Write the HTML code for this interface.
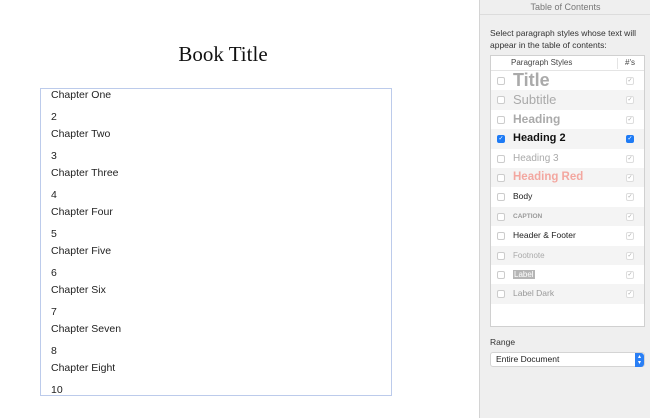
<!DOCTYPE html><html><head><style>
body{margin:0;width:650px;height:418px;overflow:hidden;background:#fff;font-family:"Liberation Sans",Helvetica,sans-serif;position:relative}
.title{position:absolute;left:0;width:446px;top:42px;text-align:center;font-family:"Liberation Serif",serif;font-size:21px;color:#111}
.box{position:absolute;left:40px;top:88px;width:350px;height:306px;border:1px solid #bccbeb;overflow:hidden}
.box div{position:absolute;left:10px;font-size:10.5px;color:#222}
.side{position:absolute;left:479px;top:0;width:171px;height:418px;background:#efefef;border-left:1px solid #d4d4d4}
.hdr{height:14px;border-bottom:1px solid #dcdcdc;text-align:center;font-size:9px;color:#777;line-height:14px}
.desc{position:absolute;left:10px;top:27px;font-size:8.5px;color:#333;line-height:12px}
.tbl{position:absolute;left:10px;top:55px;width:153px;height:270px;background:#fff;border:1px solid #d0d0d0}
.th{height:14px;border-bottom:1px solid #e4e4e4;font-size:8px;color:#444;line-height:14px;position:relative}
.row{height:19.4px;position:relative}
.cb{position:absolute;left:6px;top:6px;width:6px;height:6px;border:1px solid #ccc;border-radius:2px;background:#fff;font-size:6px;line-height:6px;color:#fff;text-align:center}
.ck{position:absolute;left:135px;top:6px;width:6px;height:6px;border:1px solid #ddd;border-radius:2px;background:#fff;font-size:6px;line-height:6px;color:#aaa;text-align:center}
.on{background:#1e7bf5;border-color:#1e7bf5;color:#fff}
.lab{position:absolute;left:22px;top:0;line-height:19.4px;white-space:nowrap}
</style></head><body>
<div class="title">Book Title</div>
<div class="box">
<div style="top:0px">Chapter One</div>
<div style="top:22px">2</div><div style="top:39px">Chapter Two</div>
<div style="top:61px">3</div><div style="top:78px">Chapter Three</div>
<div style="top:100px">4</div><div style="top:117px">Chapter Four</div>
<div style="top:139px">5</div><div style="top:156px">Chapter Five</div>
<div style="top:178px">6</div><div style="top:195px">Chapter Six</div>
<div style="top:217px">7</div><div style="top:234px">Chapter Seven</div>
<div style="top:256px">8</div><div style="top:273px">Chapter Eight</div>
<div style="top:295px">10</div>
</div>
<div class="side">
<div class="hdr">Table of Contents</div>
<div class="desc">Select paragraph styles whose text will<br>appear in the table of contents:</div>
<div class="tbl">
<div class="th"><span style="position:absolute;left:20px">Paragraph Styles</span><span style="position:absolute;left:126px;top:2px;height:11px;border-left:1px solid #e4e4e4"></span><span style="position:absolute;left:134px">#'s</span></div>
<div>
<div class="row" style="background:#fff"><span class="cb"></span><span class="lab" style="font-size:18px;font-weight:bold;color:#aaa">Title</span><span class="ck">✓</span></div>
<div class="row" style="background:#f4f4f4"><span class="cb"></span><span class="lab" style="font-size:13px;color:#aaa">Subtitle</span><span class="ck">✓</span></div>
<div class="row" style="background:#fff"><span class="cb"></span><span class="lab" style="font-size:12px;font-weight:bold;color:#aaa">Heading</span><span class="ck">✓</span></div>
<div class="row" style="background:#f4f4f4"><span class="cb on">✓</span><span class="lab" style="font-size:11px;font-weight:bold;color:#111">Heading 2</span><span class="ck on">✓</span></div>
<div class="row" style="background:#fff"><span class="cb"></span><span class="lab" style="font-size:10px;color:#aaa">Heading 3</span><span class="ck">✓</span></div>
<div class="row" style="background:#f4f4f4"><span class="cb"></span><span class="lab" style="font-size:11.5px;font-weight:bold;color:#f3a7a0">Heading Red</span><span class="ck">✓</span></div>
<div class="row" style="background:#fff"><span class="cb"></span><span class="lab" style="font-size:8.5px;color:#222">Body</span><span class="ck">✓</span></div>
<div class="row" style="background:#f4f4f4"><span class="cb"></span><span class="lab" style="font-size:6.5px;font-weight:bold;color:#999">CAPTION</span><span class="ck">✓</span></div>
<div class="row" style="background:#fff"><span class="cb"></span><span class="lab" style="font-size:8.5px;color:#222">Header &amp; Footer</span><span class="ck">✓</span></div>
<div class="row" style="background:#f4f4f4"><span class="cb"></span><span class="lab" style="font-size:8px;color:#aaa">Footnote</span><span class="ck">✓</span></div>
<div class="row" style="background:#fff"><span class="cb"></span><span class="lab" style="font-size:8px;color:#fff"><span style="background:#b5b5b5;padding:0 1px">Label</span></span><span class="ck">✓</span></div>
<div class="row" style="background:#f4f4f4"><span class="cb"></span><span class="lab" style="font-size:8.5px;color:#999">Label Dark</span><span class="ck">✓</span></div>
</div></div>
<div style="position:absolute;left:10px;top:337px;font-size:8.5px;color:#333">Range</div>
<div style="position:absolute;left:10px;top:352px;width:153px;height:13px;background:#fff;border:1px solid #d4d4d4;border-radius:3px;font-size:8.5px;line-height:13px;color:#222"><span style="padding-left:5px">Entire Document</span><span style="position:absolute;right:0;top:0;width:9px;height:13px;background:#2a7ff5;border-radius:0 3px 3px 0;color:#fff;font-size:6px;line-height:6px;text-align:center;padding-top:1px">▴<br>▾</span></div>
</div>
</body></html>
